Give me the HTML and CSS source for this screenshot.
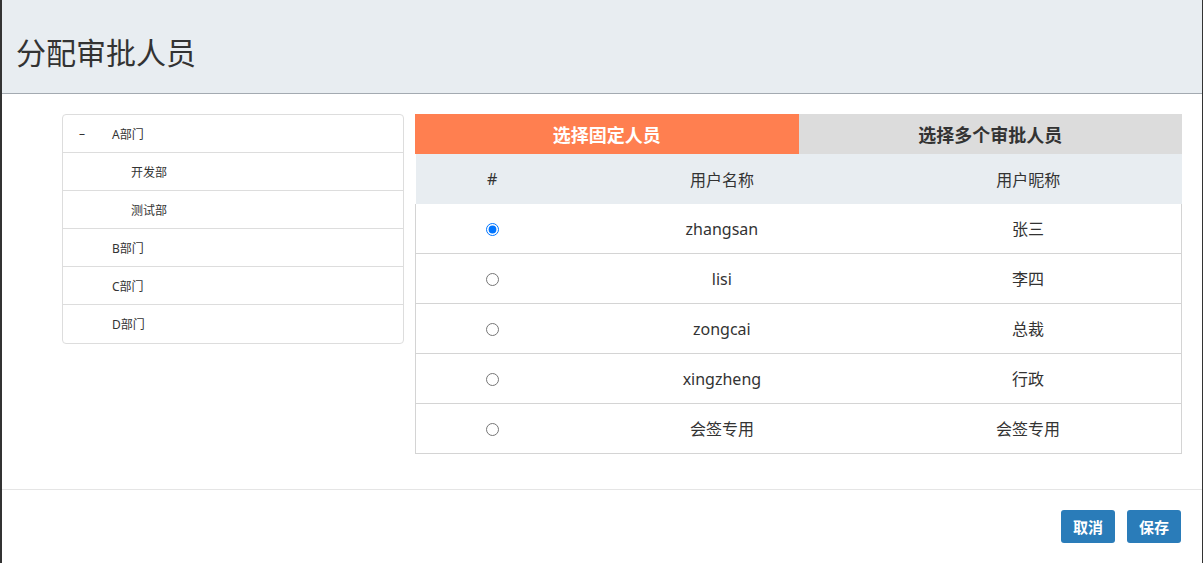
FILE: index.html
```html
<!DOCTYPE html>
<html lang="zh">
<head>
<meta charset="utf-8">
<title>分配审批人员</title>
<link rel="stylesheet" href="styles.css">
</head>
<body>
<div class="modal">
  <div class="modal-header"><h2 class="title">分配审批人员</h2></div>
  <div class="modal-body">
    <ul class="tree">
      <li class="node"><span class="toggle">–</span><span class="label">A部门</span></li>
      <li class="node child"><span class="label">开发部</span></li>
      <li class="node child"><span class="label">测试部</span></li>
      <li class="node"><span class="toggle"></span><span class="label">B部门</span></li>
      <li class="node"><span class="toggle"></span><span class="label">C部门</span></li>
      <li class="node"><span class="toggle"></span><span class="label">D部门</span></li>
    </ul>
    <div class="panel">
      <div class="tabs">
        <div class="tab active">选择固定人员</div>
        <div class="tab">选择多个审批人员</div>
      </div>
      <table class="users">
        <thead>
          <tr><th class="c1">#</th><th class="c2">用户名称</th><th class="c3">用户昵称</th></tr>
        </thead>
        <tbody>
          <tr><td><input type="radio" name="u" checked></td><td>zhangsan</td><td>张三</td></tr>
          <tr><td><input type="radio" name="u"></td><td>lisi</td><td>李四</td></tr>
          <tr><td><input type="radio" name="u"></td><td>zongcai</td><td>总裁</td></tr>
          <tr><td><input type="radio" name="u"></td><td>xingzheng</td><td>行政</td></tr>
          <tr><td><input type="radio" name="u"></td><td>会签专用</td><td>会签专用</td></tr>
        </tbody>
      </table>
    </div>
  </div>
  <div class="modal-footer">
    <button class="btn">取消</button>
    <button class="btn">保存</button>
  </div>
</div>
</body>
</html>
```
FILE: styles.css
```css
html, body {
  margin: 0;
  padding: 0;
  height: 100%;
  background: #333333;
  overflow: hidden;
}
body {
  font-family: "Noto Sans", "Noto Sans CJK SC", sans-serif;
  color: #333333;
}
.modal {
  margin-left: 2px;
  width: 1200px;
  height: 563px;
  background: #ffffff;
}
.modal-header {
  height: 93px;
  background: #e8edf1;
  border-bottom: 1px solid #a3aab1;
  display: flex;
  align-items: center;
  padding-left: 14px;
  box-sizing: content-box;
}
.title {
  margin: 12px 0 0 0;
  font-size: 30px;
  font-weight: normal;
  color: #333333;
  line-height: 1;
}
.modal-body {
  display: flex;
  align-items: flex-start;
  gap: 11px;
  padding: 20px 20px 35px 60px;
  border-bottom: 1px solid #e5e5e5;
}
.tree {
  list-style: none;
  margin: 0;
  padding: 0;
  width: 342px;
  flex: none;
  border: 1px solid #dddddd;
  border-radius: 4px;
  box-sizing: border-box;
  font-size: 12px;
}
.node {
  height: 38px;
  display: flex;
  align-items: center;
  border-top: 1px solid #dddddd;
  box-sizing: border-box;
  padding-left: 16px;
}
.node:first-child {
  border-top: none;
  height: 37px;
}
.node:last-child {
  height: 39px;
}
.toggle {
  width: 33px;
  flex: none;
  font-size: 12px;
}
.child .label {
  margin-left: 52px;
}
.panel {
  flex: 1;
  min-width: 0;
}
.tabs {
  display: flex;
  height: 40px;
}
.tab {
  flex: 1;
  display: flex;
  align-items: center;
  justify-content: center;
  background: #dcdcdc;
  color: #333333;
  font-size: 18px;
  font-weight: bold;
}
.tab.active {
  background: #ff7f50;
  color: #ffffff;
}
.users {
  width: 100%;
  border-collapse: collapse;
  table-layout: fixed;
  font-size: 16px;
}
.users th {
  height: 50px;
  background: #e8edf1;
  font-weight: normal;
  padding: 0;
}
.c1 { width: 20%; }
.c2 { width: 40%; }
.c3 { width: 40%; }
.users td {
  height: 49px;
  text-align: center;
  border: 1px solid #d4d4d4;
  border-left: none;
  border-right: none;
  padding: 0;
  line-height: 20px;
}
.users td:first-child { border-left: 1px solid #d4d4d4; }
.users td:last-child { border-right: 1px solid #d4d4d4; }
.users tbody tr:first-child td { border-top: none; }
.users input {
  margin: 0 0 2px 0;
  width: 13px;
  height: 13px;
  vertical-align: middle;
}
.modal-footer {
  display: flex;
  justify-content: flex-end;
  gap: 12px;
  padding: 20px 21px 0 0;
}
.btn {
  width: 54px;
  height: 33px;
  border: none;
  border-radius: 3px;
  background: #2a7cb9;
  color: #ffffff;
  font-family: "Noto Sans CJK SC", sans-serif;
  font-size: 15px;
  font-weight: bold;
  padding: 0;
}
```
